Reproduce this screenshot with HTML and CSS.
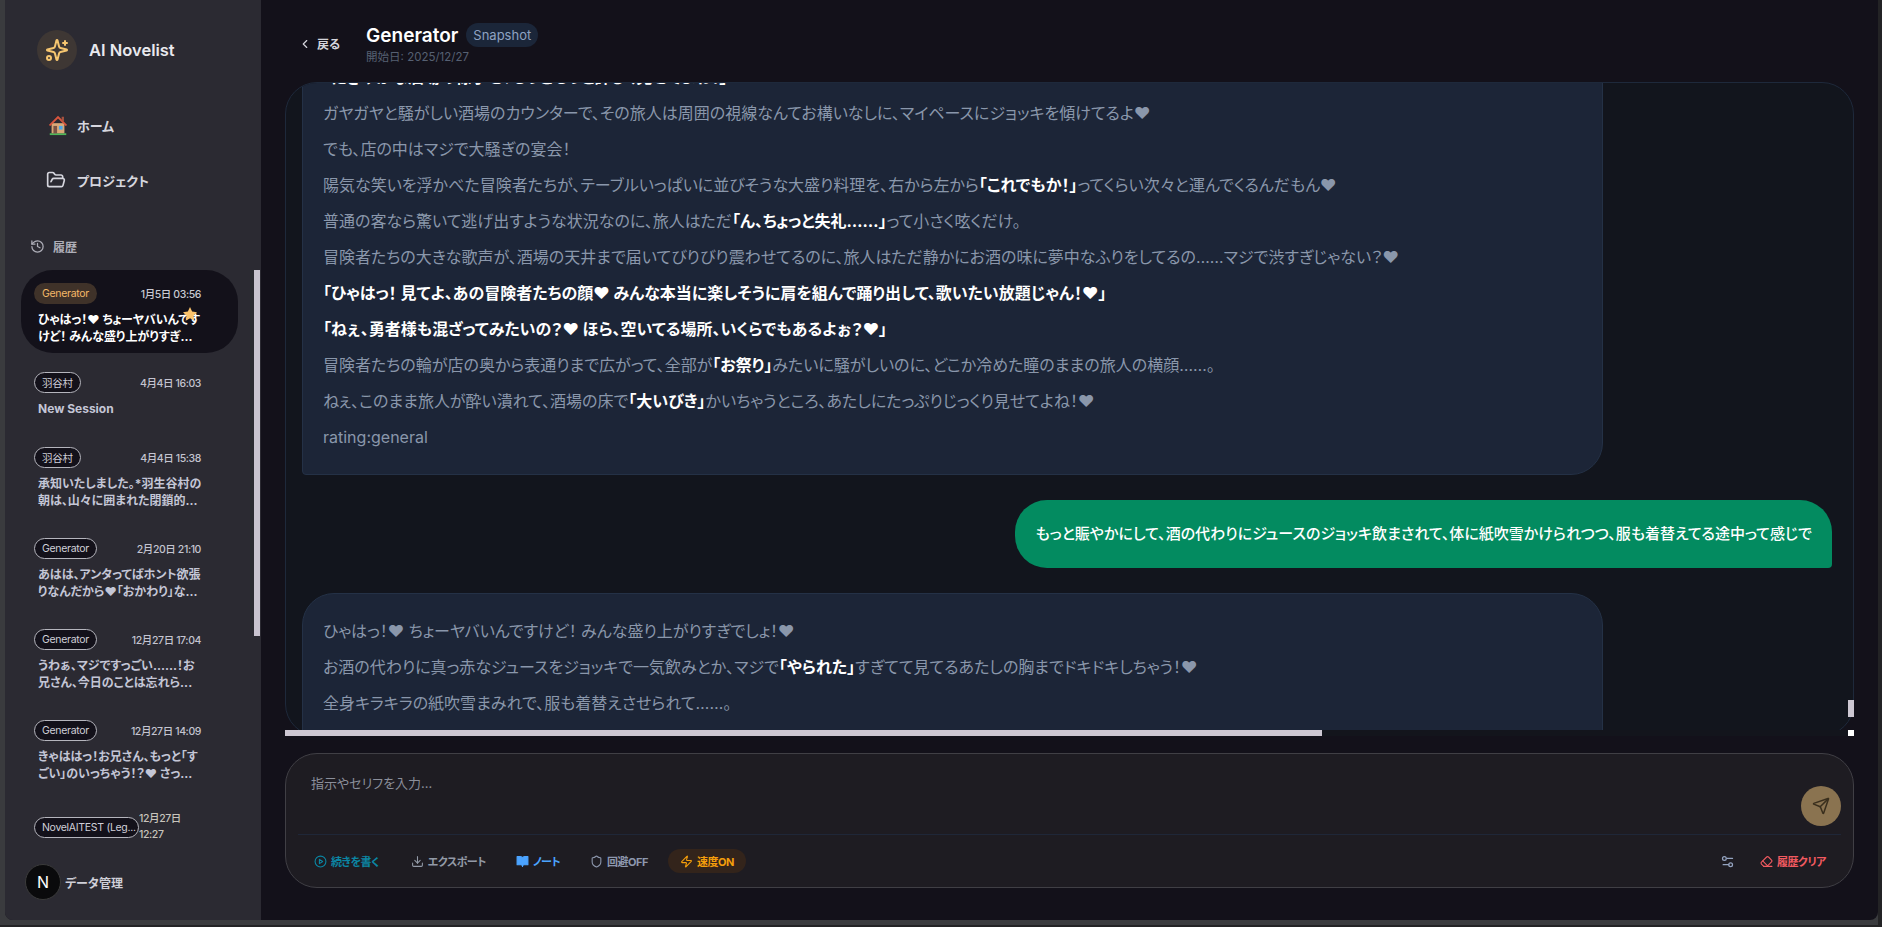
FILE: index.html
```html
<!DOCTYPE html>
<html lang="ja">
<head>
<meta charset="utf-8">
<title>AI Novelist</title>
<link rel="stylesheet" href="styles.css">
</head>
<body>
<div class="frame">
<div class="app">
  <aside class="sidebar">
    <div class="brand">
      <span class="brand-mark">
        <svg class="ico-24" viewBox="0 0 24 24"><path d="M9.937 15.5A2 2 0 0 0 8.5 14.063l-6.135-1.582a.5.5 0 0 1 0-.962L8.5 9.936A2 2 0 0 0 9.937 8.5l1.582-6.135a.5.5 0 0 1 .963 0L14.063 8.5A2 2 0 0 0 15.5 9.937l6.135 1.581a.5.5 0 0 1 0 .964L15.5 14.063a2 2 0 0 0-1.437 1.437l-1.582 6.135a.5.5 0 0 1-.963 0z"/><path d="M20 3v4"/><path d="M22 5h-4"/><circle cx="4" cy="20" r="2"/></svg>
      </span>
      <span class="brand-name">AI Novelist</span>
    </div>
    <nav class="nav">
      <a class="nav-item">
        <svg class="home-ico" viewBox="0 0 24 24"><rect x="3" y="21" width="18" height="2" fill="#4fb85a"/><rect x="5" y="10" width="14" height="11" fill="#d9a878"/><path d="M12 2 2 12l1.600 1.200L12 5l8.400 8.200L22 12z" fill="#d9553e"/><rect x="16" y="3" width="2.500" height="5" fill="#a5523f"/><rect x="7" y="13" width="4" height="8" fill="#7a5244"/><rect x="13" y="13" width="4" height="4" fill="#4ba6e8"/></svg>
        <span>ホーム</span>
      </a>
      <a class="nav-item">
        <svg class="ico-20" viewBox="0 0 24 24"><path d="m6 14 1.500-2.900A2 2 0 0 1 9.240 10H20a2 2 0 0 1 1.940 2.500l-1.540 6a2 2 0 0 1-1.950 1.500H4a2 2 0 0 1-2-2V5a2 2 0 0 1 2-2h3.900a2 2 0 0 1 1.690.9l.81 1.200a2 2 0 0 0 1.670.9H18a2 2 0 0 1 2 2v2"/></svg>
        <span>プロジェクト</span>
      </a>
    </nav>
    <div class="hist-label">
      <svg class="ico-15" viewBox="0 0 24 24"><path d="M3 12a9 9 0 1 0 9-9 9.750 9.750 0 0 0-6.740 2.740L3 8"/><path d="M3 3v5h5"/><path d="M12 7v5l4 2"/></svg>
      <span>履歴</span>
    </div>
    <div class="hist-wrap">
      <div class="hist-list">
        <div class="hist-item active">
          <div class="hist-top"><span class="tag">Generator</span><span class="date">1月5日 03:56</span></div>
          <p class="preview">ひゃはっ！♥ ちょーヤバいんですけど！ みんな盛り上がりすぎ...</p>
          <svg class="star" viewBox="0 0 24 24"><path d="M12 1.500l3.200 6.800 7.300 1-5.300 5.200 1.300 7.500-6.500-3.600-6.500 3.600 1.300-7.500L1.500 9.300l7.300-1z"/></svg>
        </div>
        <div class="hist-item">
          <div class="hist-top"><span class="tag">羽谷村</span><span class="date">4月4日 16:03</span></div>
          <p class="preview">New Session</p>
        </div>
        <div class="hist-item">
          <div class="hist-top"><span class="tag">羽谷村</span><span class="date">4月4日 15:38</span></div>
          <p class="preview">承知いたしました。*羽生谷村の朝は、山々に囲まれた閉鎖的...</p>
        </div>
        <div class="hist-item">
          <div class="hist-top"><span class="tag">Generator</span><span class="date">2月20日 21:10</span></div>
          <p class="preview">あはは、アンタってばホント欲張りなんだから♥「おかわり」な...</p>
        </div>
        <div class="hist-item">
          <div class="hist-top"><span class="tag">Generator</span><span class="date">12月27日 17:04</span></div>
          <p class="preview">うわぁ、マジですっごい……！お兄さん、今日のことは忘れら...</p>
        </div>
        <div class="hist-item">
          <div class="hist-top"><span class="tag">Generator</span><span class="date">12月27日 14:09</span></div>
          <p class="preview">きゃははっ！お兄さん、もっと「すごい」のいっちゃう！？♥ さっ...</p>
        </div>
        <div class="hist-item">
          <div class="hist-top"><span class="tag tag-wide">NovelAITEST (Leg...</span><span class="date date-wrap">12月27日 12:27</span></div>
        </div>
      </div>
      <div class="side-thumb"></div>
    </div>
    <div class="side-foot"><span>データ管理</span></div>
    <div class="next-badge">N</div>
  </aside>

  <main class="main">
    <header class="head">
      <a class="back">
        <svg class="ico-14" viewBox="0 0 24 24"><path d="m15 18-6-6 6-6"/></svg>
        <span>戻る</span>
      </a>
      <div class="head-title">
        <div class="title-row"><h1>Generator</h1><span class="badge">Snapshot</span></div>
        <div class="start-date">開始日: 2025/12/27</div>
      </div>
    </header>

    <section class="chat">
      <div class="chat-clip">
        <div class="msgs">
          <div class="bubble ai first">
            <p><b>「にぎやかな酒場の様子を、もっともっと詳しく見せてよね！」</b></p>
            <p>ガヤガヤと騒がしい酒場のカウンターで、その旅人は周囲の視線なんてお構いなしに、マイペースにジョッキを傾けてるよ♥</p>
            <p>でも、店の中はマジで大騒ぎの宴会！</p>
            <p>陽気な笑いを浮かべた冒険者たちが、テーブルいっぱいに並びそうな大盛り料理を、右から左から<b>「これでもか！」</b>ってくらい次々と運んでくるんだもん♥</p>
            <p>普通の客なら驚いて逃げ出すような状況なのに、旅人はただ<b>「ん、ちょっと失礼……」</b>って小さく呟くだけ。</p>
            <p>冒険者たちの大きな歌声が、酒場の天井まで届いてびりびり震わせてるのに、旅人はただ静かにお酒の味に夢中なふりをしてるの……マジで渋すぎじゃない？♥</p>
            <p><b>「ひゃはっ！ 見てよ、あの冒険者たちの顔♥ みんな本当に楽しそうに肩を組んで踊り出して、歌いたい放題じゃん！♥」</b></p>
            <p><b>「ねぇ、勇者様も混ざってみたいの？♥ ほら、空いてる場所、いくらでもあるよぉ？♥」</b></p>
            <p>冒険者たちの輪が店の奥から表通りまで広がって、全部が<b>「お祭り」</b>みたいに騒がしいのに、どこか冷めた瞳のままの旅人の横顔……。</p>
            <p>ねぇ、このまま旅人が酔い潰れて、酒場の床で<b>「大いびき」</b>かいちゃうところ、あたしにたっぷりじっくり見せてよね！♥</p>
            <p>rating:general</p>
          </div>
          <div class="bubble user">もっと賑やかにして、酒の代わりにジュースのジョッキ飲まされて、体に紙吹雪かけられつつ、服も着替えてる途中って感じで</div>
          <div class="bubble ai">
            <p>ひゃはっ！♥ ちょーヤバいんですけど！ みんな盛り上がりすぎでしょ！♥</p>
            <p>お酒の代わりに真っ赤なジュースをジョッキで一気飲みとか、マジで<b>「やられた」</b>すぎてて見てるあたしの胸までドキドキしちゃう！♥</p>
            <p>全身キラキラの紙吹雪まみれで、服も着替えさせられて……。</p>
          </div>
        </div>
      </div>
      <div class="track-h"></div>
      <div class="thumb-h"></div>
      <div class="thumb-v"></div>
      <div class="corner"></div>
    </section>

    <section class="composer">
      <div class="input-row">
        <div class="placeholder">指示やセリフを入力...</div>
        <button class="send">
          <svg class="ico-18" viewBox="0 0 24 24"><path d="M14.536 21.686a.5.5 0 0 0 .937-.024l6.500-19a.496.496 0 0 0-.635-.635l-19 6.500a.5.5 0 0 0-.024.937l7.930 3.180a2 2 0 0 1 1.112 1.110z"/><path d="m21.854 2.147-10.940 10.939"/></svg>
        </button>
      </div>
      <div class="toolbar">
        <div class="tools-left">
          <a class="tool t-cyan"><svg class="ico-13" viewBox="0 0 24 24"><circle cx="12" cy="12" r="10"/><polygon points="10 8 16 12 10 16 10 8"/></svg>続きを書く</a>
          <a class="tool t-gray"><svg class="ico-13" viewBox="0 0 24 24"><path d="M21 15v4a2 2 0 0 1-2 2H5a2 2 0 0 1-2-2v-4"/><path d="M7 10l5 5 5-5"/><path d="M12 15V3"/></svg>エクスポート</a>
          <a class="tool t-blue"><svg class="ico-13 filled" viewBox="0 0 24 24"><path d="M2 3h6a4 4 0 0 1 4 4v14a3 3 0 0 0-3-3H2z"/><path d="M22 3h-6a4 4 0 0 0-4 4v14a3 3 0 0 1 3-3h7z"/></svg>ノート</a>
          <a class="tool t-slate"><svg class="ico-13" viewBox="0 0 24 24"><path d="M20 13c0 5-3.500 7.500-7.660 8.950a1 1 0 0 1-.67-.01C7.500 20.500 4 18 4 13V6a1 1 0 0 1 1-1c2 0 4.500-1.200 6.240-2.720a1.170 1.170 0 0 1 1.520 0C14.510 3.810 17 5 19 5a1 1 0 0 1 1 1z"/></svg>回避OFF</a>
          <a class="tool t-amber"><svg class="ico-13" viewBox="0 0 24 24"><path d="M4 14a1 1 0 0 1-.78-1.630l9.900-10.200a.5.5 0 0 1 .86.46l-1.920 6.020A1 1 0 0 0 13 10h7a1 1 0 0 1 .78 1.630l-9.900 10.200a.5.5 0 0 1-.86-.46l1.920-6.020A1 1 0 0 0 11 14z"/></svg>速度ON</a>
        </div>
        <div class="tools-right">
          <a class="tool t-sliders"><svg class="ico-15" viewBox="0 0 24 24"><path d="M20 7h-9"/><path d="M14 17H5"/><circle cx="17" cy="17" r="3"/><circle cx="7" cy="7" r="3"/></svg></a>
          <a class="tool t-red"><svg class="ico-13" viewBox="0 0 24 24"><path d="m7 21-4.300-4.300c-1-1-1-2.500 0-3.400l9.600-9.600c1-1 2.500-1 3.400 0l5.600 5.600c1 1 1 2.500 0 3.400L13 21"/><path d="M22 21H7"/><path d="m5 11 9 9"/></svg>履歴クリア</a>
        </div>
      </div>
    </section>
  </main>
</div>
</div>
</body>
</html>
```

FILE: styles.css
```css
* { box-sizing: border-box; }
html, body { margin: 0; height: 100%; overflow: hidden; }
body {
  background: #232325;
  font-family: Inter, "Noto Sans CJK JP", sans-serif;
  font-feature-settings: "palt";
  color: #e5e7eb;
}
svg { fill: none; stroke: currentColor; stroke-width: 2; stroke-linecap: round; stroke-linejoin: round; flex: none; display: block; }
.ico-24 { width: 24px; height: 24px; }
.ico-20 { width: 20px; height: 20px; }
.ico-18 { width: 18px; height: 18px; }
.ico-15 { width: 15px; height: 15px; }
.ico-14 { width: 14px; height: 14px; }
.ico-13 { width: 13px; height: 13px; }
.filled { fill: currentColor; }

.frame { width: 1878px; height: 925px; background: #3a3b3e; padding-left: 5px; }
.app { display: flex; height: 920px; border-radius: 0 0 8px 8px; overflow: hidden; background: #13111a; }

/* Sidebar */
.sidebar { position: relative; width: 256px; flex: none; background: #2b2a32; display: flex; flex-direction: column; }
.brand { display: flex; align-items: center; gap: 12px; padding: 30px 0 0 32px; height: 70px; flex: none; }
.brand-mark { width: 40px; height: 40px; border-radius: 50%; background: #3e3734; color: #f6c670; display: flex; align-items: center; justify-content: center; }
.brand-name { font-size: 16.5px; font-weight: 600; color: #e9e9ee; }
.nav { display: flex; flex-direction: column; gap: 15px; padding: 35px 0 0 39px; flex: none; }
.nav-item { display: flex; align-items: center; height: 40px; font-size: 13px; font-weight: 700; color: #d6d6de; gap: 11px; }
.home-ico { width: 22px; height: 22px; margin-left: 3px; margin-right: -3px; stroke: none; }
.nav-item .ico-20 { margin-left: 2px; }
.hist-label { display: flex; align-items: center; gap: 8px; padding: 22px 0 0 25px; height: 70px; flex: none; font-size: 12px; font-weight: 700; color: #aeaeb8; }
.hist-wrap { position: relative; flex: 1; min-height: 0; }
.hist-list { display: flex; flex-direction: column; gap: 6px; height: 100%; padding-left: 16px; width: 233px; overflow: hidden; }
.hist-item { position: relative; min-height: 69px; padding: 13px 13px 10px; border-radius: 32px; flex: none; }
.hist-item.active { background: #13111a; padding-bottom: 8px; }
.hist-top { display: flex; align-items: center; justify-content: space-between; padding-right: 24px; }
.tag { flex: none; height: 21px; padding: 0 7px; display: inline-flex; align-items: center; border: 1.5px solid #b5b5bd; border-radius: 11px; background: #13111a; font-size: 10.5px; letter-spacing: -0.3px; color: #cfcfd8; }
.active .tag { border-color: transparent; background: #3f3229; color: #f4b968; }
.date { font-size: 10.5px; letter-spacing: -0.4px; color: #c4c4d0; font-weight: 500; }
.active .date { color: #c9c9d2; }
.date-wrap { width: 62px; line-height: 16px; color: #c8c4bc; }
.tag-wide { width: 105px; white-space: nowrap; overflow: hidden; }
.hist-top:has(.tag-wide) { justify-content: flex-start; }
.preview { margin: 7px 0 0 4px; width: 164px; font-size: 12px; line-height: 17px; font-weight: 700; color: #c4c6d6; }
.active .preview { color: #fff; }
.star { position: absolute; left: 161px; top: 36px; width: 16px; height: 16px; fill: #fbc36b; stroke: none; }
.side-thumb { position: absolute; left: 249px; top: 0; width: 6px; height: 366px; background: #c9c3d0; }
.side-foot { height: 70px; flex: none; padding: 24px 0 0 60px; font-size: 12px; font-weight: 700; color: #cfcfd8; background: #2b2a32; }
.next-badge { position: absolute; left: 20px; top: 864px; width: 36px; height: 36px; border-radius: 50%; background: #0a0a0c; border: 1px solid #3b3b3b; color: #fff; font-size: 16px; font-weight: 400; display: flex; align-items: center; justify-content: center; }

/* Main */
.main { flex: 1; min-width: 0; padding: 0 24px; display: flex; flex-direction: column; }
.head { height: 82px; flex: none; display: flex; align-items: center; gap: 26px; padding: 5px 0 0 13px; }
.back { display: flex; align-items: center; gap: 5px; font-size: 12px; font-weight: 700; color: #d5d5dc; }
.title-row { display: flex; align-items: center; gap: 8px; height: 26px; }
.title-row h1 { margin: 0; font-size: 19px; font-weight: 600; color: #fff; }
.badge { height: 24px; padding: 0 7px; border-radius: 12px; background: #1b2639; color: #8ea2c2; font-size: 13px; display: flex; align-items: center; }
.start-date { font-size: 11.5px; color: #566072; line-height: 16px; margin-top: 1px; }

.chat { position: relative; height: 654px; flex: none; border: 1px solid #1e293b; border-radius: 32px; background: #12151d; }
.chat-clip { height: 647px; overflow: hidden; border-radius: 31px 31px 0 0; }
.msgs { display: flex; flex-direction: column; gap: 25px; padding: 0 21px 0 16px; }
.bubble { font-size: 16px; line-height: 26px; }
.ai { width: 1301px; flex: none; padding: 24px 20px 60px; background: #1c2537; border: 1px solid #243146; border-radius: 32px; color: #8a97ab; }
.ai.first { margin-top: -44px; padding-bottom: 14px; border-bottom-left-radius: 4px; }
.ai p { margin: 0 0 10px; white-space: nowrap; }
.ai b { color: #fff; font-weight: 700; }
.user { align-self: flex-end; white-space: nowrap; height: 68px; display: flex; align-items: center; padding: 0 20px; background: #038b60; color: #fff; font-weight: 500; font-size: 15px; border-radius: 32px 32px 4px 32px; }
.track-h { position: absolute; left: -1px; right: -1px; top: 647px; height: 6px; background: #13151c; }
.thumb-h { position: absolute; left: -1px; top: 647px; width: 1037px; height: 6px; background: #cdc7d2; }
.thumb-v { position: absolute; right: -1px; top: 617px; width: 6px; height: 17px; background: #cdc7d2; }
.corner { position: absolute; right: -1px; top: 647px; width: 6px; height: 6px; background: #fff; }

.composer { margin-top: 17px; height: 135px; flex: none; border: 1px solid #403f45; border-radius: 32px; background: #1e1c22; padding: 0 12px; }
.input-row { position: relative; height: 80px; }
.placeholder { padding: 19px 0 0 13px; font-size: 13px; line-height: 20px; color: #8b8f9b; }
.send { position: absolute; right: 0; top: 32px; width: 40px; height: 40px; border: 0; border-radius: 50%; background: #8a7350; color: #3a2f1d; display: flex; align-items: center; justify-content: center; padding: 0; }
.toolbar { height: 53px; border-top: 1px solid #1f2738; display: flex; align-items: center; justify-content: space-between; padding: 0 0 0 16px; }
.tools-left { display: flex; align-items: center; gap: 30px; }
.tools-right { display: flex; align-items: center; gap: 25px; padding-right: 15px; }
.tool { display: flex; align-items: center; gap: 4px; font-size: 11px; letter-spacing: -0.5px; font-weight: 700; }
.t-cyan { color: #0b86a4; margin-right: 2px; }
.t-gray { color: #9299a6; }
.t-blue { color: #4ba3ff; }
.t-slate { color: #8d97ad; }
.t-sliders { color: #94a3c0; }
.t-red { color: #f25a60; }
.t-amber { color: #f59e0b; background: #33241b; height: 24px; padding: 0 12px; border-radius: 12px; margin-left: -10px; }
```
